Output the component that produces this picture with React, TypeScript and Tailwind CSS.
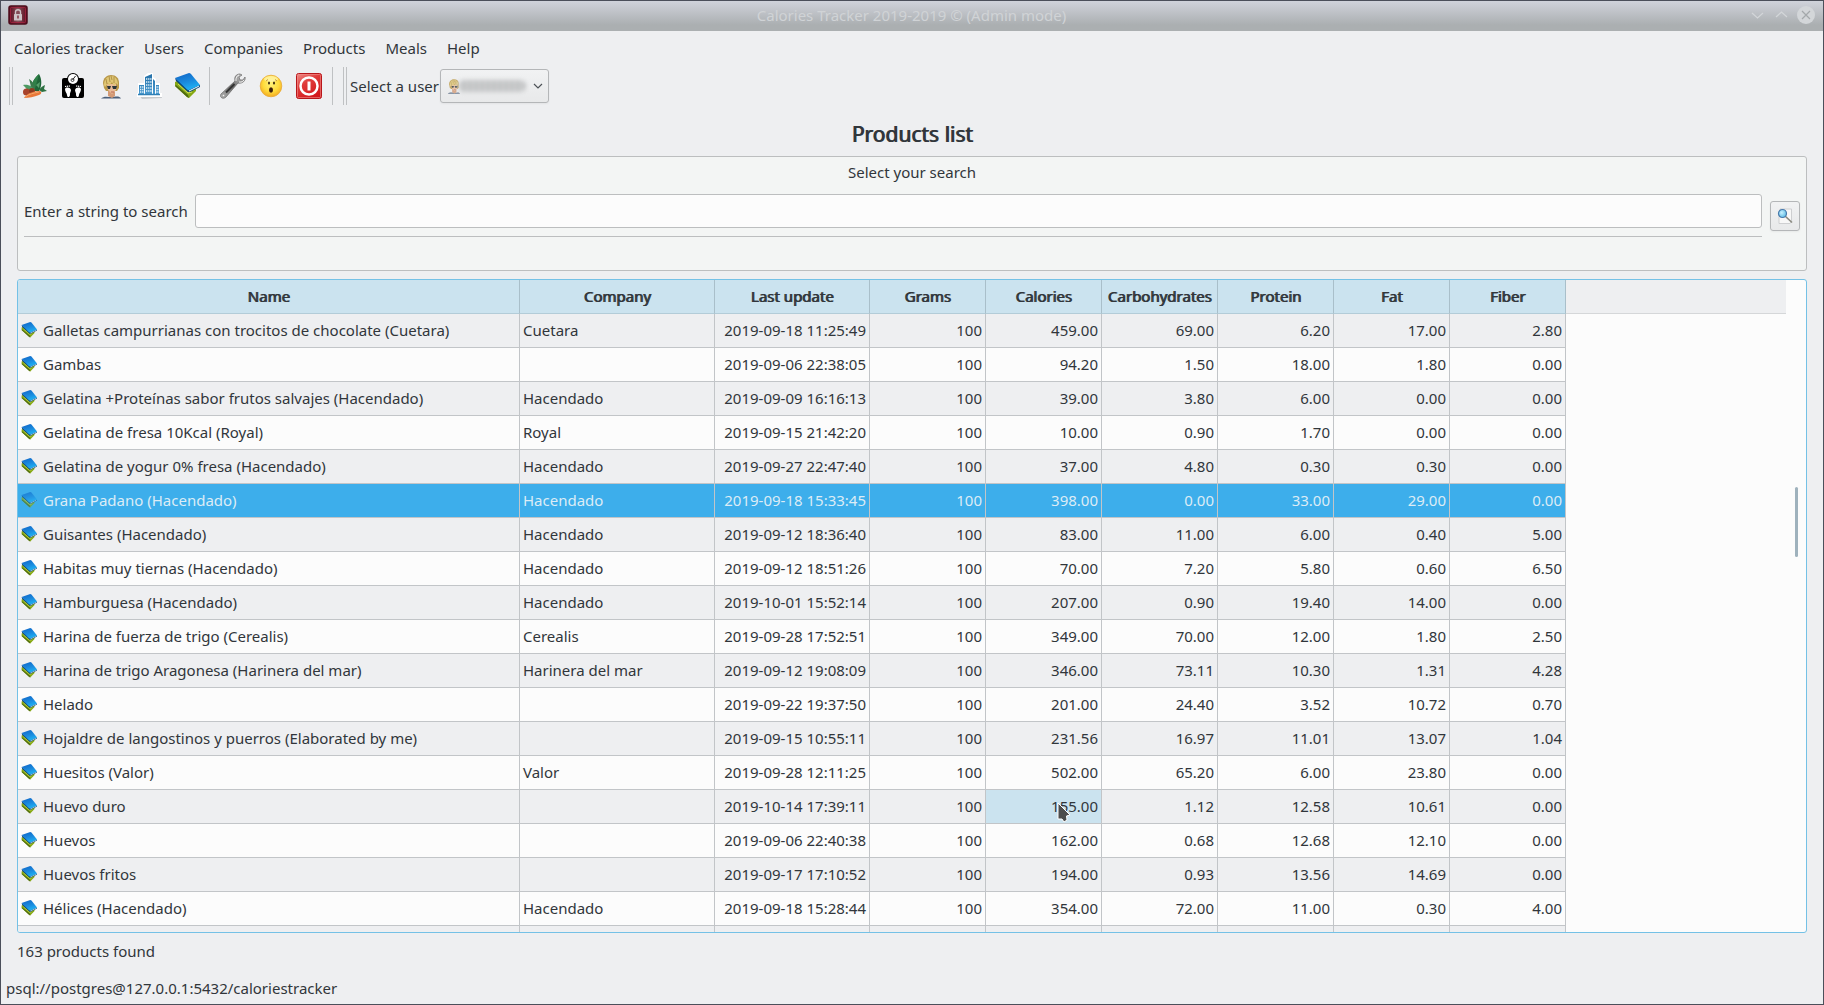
import React from "react";

type Row = [string, string, string, string, string, string, string, string, string];

const rows: Row[] = [
  ["Galletas campurrianas con trocitos de chocolate (Cuetara)", "Cuetara", "2019-09-18 11:25:49", "100", "459.00", "69.00", "6.20", "17.00", "2.80"],
  ["Gambas", "", "2019-09-06 22:38:05", "100", "94.20", "1.50", "18.00", "1.80", "0.00"],
  ["Gelatina +Proteínas sabor frutos salvajes (Hacendado)", "Hacendado", "2019-09-09 16:16:13", "100", "39.00", "3.80", "6.00", "0.00", "0.00"],
  ["Gelatina de fresa 10Kcal (Royal)", "Royal", "2019-09-15 21:42:20", "100", "10.00", "0.90", "1.70", "0.00", "0.00"],
  ["Gelatina de yogur 0% fresa (Hacendado)", "Hacendado", "2019-09-27 22:47:40", "100", "37.00", "4.80", "0.30", "0.30", "0.00"],
  ["Grana Padano (Hacendado)", "Hacendado", "2019-09-18 15:33:45", "100", "398.00", "0.00", "33.00", "29.00", "0.00"],
  ["Guisantes (Hacendado)", "Hacendado", "2019-09-12 18:36:40", "100", "83.00", "11.00", "6.00", "0.40", "5.00"],
  ["Habitas muy tiernas (Hacendado)", "Hacendado", "2019-09-12 18:51:26", "100", "70.00", "7.20", "5.80", "0.60", "6.50"],
  ["Hamburguesa (Hacendado)", "Hacendado", "2019-10-01 15:52:14", "100", "207.00", "0.90", "19.40", "14.00", "0.00"],
  ["Harina de fuerza de trigo (Cerealis)", "Cerealis", "2019-09-28 17:52:51", "100", "349.00", "70.00", "12.00", "1.80", "2.50"],
  ["Harina de trigo Aragonesa (Harinera del mar)", "Harinera del mar", "2019-09-12 19:08:09", "100", "346.00", "73.11", "10.30", "1.31", "4.28"],
  ["Helado", "", "2019-09-22 19:37:50", "100", "201.00", "24.40", "3.52", "10.72", "0.70"],
  ["Hojaldre de langostinos y puerros (Elaborated by me)", "", "2019-09-15 10:55:11", "100", "231.56", "16.97", "11.01", "13.07", "1.04"],
  ["Huesitos (Valor)", "Valor", "2019-09-28 12:11:25", "100", "502.00", "65.20", "6.00", "23.80", "0.00"],
  ["Huevo duro", "", "2019-10-14 17:39:11", "100", "155.00", "1.12", "12.58", "10.61", "0.00"],
  ["Huevos", "", "2019-09-06 22:40:38", "100", "162.00", "0.68", "12.68", "12.10", "0.00"],
  ["Huevos fritos", "", "2019-09-17 17:10:52", "100", "194.00", "0.93", "13.56", "14.69", "0.00"],
  ["Hélices (Hacendado)", "Hacendado", "2019-09-18 15:28:44", "100", "354.00", "72.00", "11.00", "0.30", "4.00"],
];

const headers = ["Name", "Company", "Last update", "Grams", "Calories", "Carbohydrates", "Protein", "Fat", "Fiber"];
const menus = ["Calories tracker", "Users", "Companies", "Products", "Meals", "Help"];
const SELECTED = 5;
const HOVERED = 14;

function Defs() {
  return (
    <svg width="0" height="0" className="absolute" aria-hidden="true">
      <defs>
        <linearGradient id="book" x1="0.300" y1="0" x2="0.700" y2="1">
          <stop offset="0" stopColor="#1169c9" />
          <stop offset="0.5" stopColor="#1a8ade" />
          <stop offset="1" stopColor="#20b6f6" />
        </linearGradient>
        <linearGradient id="red" x1="0" y1="0" x2="0.600" y2="1">
          <stop offset="0" stopColor="#f0908c" />
          <stop offset="0.45" stopColor="#df3b3a" />
          <stop offset="1" stopColor="#d3181c" />
        </linearGradient>
        <radialGradient id="face" cx="0.5" cy="0.4" r="0.6">
          <stop offset="0" stopColor="#fff27a" />
          <stop offset="0.6" stopColor="#ffdc3c" />
          <stop offset="1" stopColor="#f3ab22" />
        </radialGradient>
        <linearGradient id="steel" x1="0" y1="1" x2="1" y2="0">
          <stop offset="0" stopColor="#b5b5b5" />
          <stop offset="0.5" stopColor="#6d6d6d" />
          <stop offset="1" stopColor="#d6d6d6" />
        </linearGradient>
        <radialGradient id="lens" cx="0.4" cy="0.4" r="0.6">
          <stop offset="0" stopColor="#c8f1ff" />
          <stop offset="1" stopColor="#62bfe6" />
        </radialGradient>
        <linearGradient id="lock" x1="0" y1="0" x2="1" y2="0">
          <stop offset="0" stopColor="#5c0b1d" />
          <stop offset="0.5" stopColor="#86505a" />
          <stop offset="1" stopColor="#5c0b1d" />
        </linearGradient>
        <linearGradient id="tower" x1="0" y1="0" x2="0" y2="1">
          <stop offset="0" stopColor="#2470a8" />
          <stop offset="1" stopColor="#4a9bd0" />
        </linearGradient>
      </defs>
    </svg>
  );
}

function BookIcon({ className }: { className: string }) {
  return (
    <svg viewBox="0 0 26 26" className={className} aria-hidden="true">
      <path d="M1 9 L3 8 L15 17 L22 14 L22 18 L15 25 L13 24 L1 13 Z" fill="#86a814" />
      <path d="M2 12 L14 22 L15 25 L13 24 L1 13 Z" fill="#4f6b10" />
      <path d="M4 11 L14 20 L18 19" fill="none" stroke="#cfdd5a" strokeWidth="1" />
      <path d="M1 5 L2 8 L14 19 L16 19 L26 14 L26 12 L14 15 Z" fill="#0b4579" />
      <path d="M15 18 L25 13" fill="none" stroke="#dbe7ee" strokeWidth="1.200" />
      <path d="M1 5 L15 0 Q16 0 17 1 L26 12 L15 17 Q14 17 13 16.500 Z" fill="url(#book)" />
    </svg>
  );
}

function CarrotIcon() {
  return (
    <svg viewBox="0 0 26 26" className="size-[26px]" aria-hidden="true">
      <path d="M17 1 C20 6 20 13 17 18 L10 18 C9 12 11 6 17 1 Z" fill="#1f6538" />
      <path d="M17 1 C15 8 14 13 12 18 L9 18 C9 12 11 6 17 1 Z" fill="#2f8048" />
      <path d="M7 6 C11 8 13 13 13 18 L9 17 C9 13 8 9 7 6 Z" fill="#3a7a4c" />
      <path d="M1 12 C7 11 11 14 13 18 L6 18 C5 16 3 14 1 12 Z" fill="#4d9a63" />
      <path d="M17 17 C19 14 21 13 23 12 L22 16 L25 18 L20 19 Z" fill="#2c7040" />
      <path d="M14 12 L18 9 L17 15 Z" fill="#57a06b" />
      <circle cx="4.500" cy="19" r="3.500" fill="#a8432c" />
      <circle cx="10" cy="18" r="3" fill="#8c3a20" />
      <path d="M2 25 C4 21 11 18 17 18 C20 18 20 21 17 22 C12 24 7 25 2 25 Z" fill="#e9783a" />
      <path d="M3 24 C7 21 12 20 17 19" fill="none" stroke="#f4a76a" strokeWidth="1" />
    </svg>
  );
}

function ScaleIcon() {
  return (
    <svg viewBox="0 0 26 26" className="size-[26px]" aria-hidden="true">
      <rect x="2" y="5" width="22" height="20" rx="2" fill="#000" />
      <circle cx="13" cy="6" r="6" fill="#000" />
      <circle cx="13" cy="6" r="5" fill="#fff" />
      <path d="M12.500 7 L15.500 3" stroke="#222" strokeWidth="1" />
      <circle cx="12.500" cy="7" r="1.500" fill="none" stroke="#222" strokeWidth="0.800" />
      <path d="M5 16 C6 14 10 14 11 17 C11 19 9.500 20 10 22 C9.500 25 7 24.500 7 22 C7 20 5 19 5 16 Z" fill="#fff" />
      <path d="M21 16 C20 14 16 14 15 17 C15 19 16.500 20 16 22 C16.500 25 19 24.500 19 22 C19 20 21 19 21 16 Z" fill="#fff" />
      <path d="M5 13.500 L10 13 M16 13 L21 13.500" stroke="#fff" strokeWidth="1.200" strokeDasharray="1.200 0.700" />
    </svg>
  );
}

function PersonIcon({ className }: { className: string }) {
  return (
    <svg viewBox="0 0 26 26" className={className} aria-hidden="true">
      <path d="M3 25.500 C6 22.500 10 24 13 24 C17 24 21 22 23 25.500 Z" fill="#4b5f7a" />
      <path d="M10 18 H17 V23 L14 25 L10 23 Z" fill="#d39a76" />
      <path d="M6 15 L5 10 C5 5 9 2 13 2 C18 2 21 5 21 10 L21 15 L19 18 L8 18 Z" fill="#b9984a" />
      <path d="M9 11 L18 11 L18 17 L14 21 L10 17 Z" fill="#e9bb98" />
      <path d="M6 12 C6 6 10 3 13 3 C17 3 20 6 20 12 L18 10 L16 13 L14 9 L11 13 L10 10 L7 14 Z" fill="#dfc673" />
      <path d="M11 3 L12 9 M16 4 L16 10 M8 6 L9 11 M13 3 L14 7" stroke="#a58540" strokeWidth="0.800" fill="none" />
      <path d="M9 13 H13 L12 16 H10 Z M14 13 H19 L18 16 H15 Z" fill="#2c353b" />
      <path d="M13 19 H16" stroke="#a9523f" strokeWidth="0.800" />
    </svg>
  );
}

function CompanyIcon() {
  return (
    <svg viewBox="0 0 26 26" className="size-[26px]" aria-hidden="true">
      <path d="M3 22 L25 21 L26 25 L6 26 Z" fill="#c6c9cc" />
      <path d="M2 10 H8 V3 L12 0 H17 V4 L20 6 V10 H24 V20 H26 V24 H1 V20 H2 Z" fill="#fff" />
      <path d="M3 12 H8 V21 H3 Z M9 4 L16 1 V21 H9 Z M17 6 L19 8 V21 H17 Z M20 12 H23 V21 H20 Z" fill="url(#tower)" />
      <path d="M2 21.500 H24" stroke="#2f7fb5" strokeWidth="1.500" />
      <path d="M4 14 H7.500 M4 16.500 H7.500 M4 19 H7.500 M10 6 H15.500 M10 9 H15.500 M10 12 H15.500 M10 15 H15.500 M10 18 H15.500 M20.500 14 H23 M20.500 16.500 H23 M20.500 19 H23" stroke="#e0f0fa" strokeWidth="1.400" strokeDasharray="1.300 0.800" />
    </svg>
  );
}

function WrenchIcon() {
  return (
    <svg viewBox="0 0 26 26" className="size-[26px]" aria-hidden="true">
      <path d="M1 21 L15 8 C14 4 16 1 20 1 L22 2 L19 4 L20 7 L23 7 L25 4 C26 8 22 11 18 10 L6 24 C3 27 -1 24 1 21 Z" fill="url(#steel)" stroke="#666" strokeWidth="0.700" />
      <path d="M6 19.500 L14.500 11" stroke="#333" strokeWidth="2" />
      <path d="M16 8 C15.500 5 17 2.500 19 2 M19 9 C22 9.500 23 8.500 24 7" stroke="#f4f4f4" strokeWidth="1" fill="none" />
      <circle cx="3.500" cy="22.500" r="1.200" fill="#f3f3f3" stroke="#777" strokeWidth="0.500" />
    </svg>
  );
}

function SurprisedIcon() {
  return (
    <svg viewBox="0 0 26 26" className="size-[26px]" aria-hidden="true">
      <circle cx="13" cy="13" r="10.800" fill="url(#face)" stroke="#e8ab3a" strokeWidth="0.800" />
      <ellipse cx="13" cy="6" rx="7" ry="3" fill="#fffbc9" opacity="0.600" />
      <ellipse cx="11" cy="10" rx="1" ry="1.600" fill="#3b2a10" />
      <ellipse cx="16" cy="10" rx="1" ry="1.600" fill="#3b2a10" />
      <path d="M8 8 L10 6.500 M17 6.500 L19 8" stroke="#b98325" strokeWidth="0.800" />
      <ellipse cx="13" cy="17" rx="2" ry="2.700" fill="#3b1d0c" />
    </svg>
  );
}

function PowerIcon() {
  return (
    <svg viewBox="0 0 26 26" className="size-[26px]" aria-hidden="true">
      <rect x="0.500" y="0.500" width="25" height="25" rx="2" fill="url(#red)" stroke="#b8161a" />
      <rect x="1.500" y="1.500" width="23" height="23" rx="1" fill="none" stroke="#f08e8b" strokeWidth="0.600" />
      <circle cx="13" cy="13" r="8.500" fill="none" stroke="#fff" strokeWidth="2.500" />
      <path d="M13 8.500 V17.500" stroke="#fff" strokeWidth="3" />
    </svg>
  );
}

function SearchIcon() {
  return (
    <svg viewBox="0 0 16 16" className="size-4" aria-hidden="true">
      <path d="M3 1 H14.500 V13 L13 15.500 H2 V8 Z" fill="#f7f7f7" stroke="#c9cbcd" strokeWidth="0.900" />
      <path d="M8 8 L15 14.500" stroke="#8a8a80" strokeWidth="1.600" />
      <circle cx="5.500" cy="5.500" r="4" fill="url(#lens)" stroke="#4879ab" strokeWidth="1.200" />
    </svg>
  );
}

function LockIcon() {
  return (
    <svg viewBox="0 0 20 20" className="size-5" aria-hidden="true">
      <rect x="1" y="1" width="18" height="18" rx="2" fill="url(#lock)" stroke="#4d0c1b" strokeWidth="1.500" />
      <rect x="2.500" y="2.500" width="15" height="15" rx="1" fill="none" stroke="#a3223f" strokeWidth="0.800" />
      <path d="M7.500 9 V7 C7.500 4 12.500 4 12.500 7 V9" fill="none" stroke="#cdc3c6" strokeWidth="1.400" />
      <rect x="6" y="9" width="8" height="6.500" rx="0.500" fill="#cdc3c6" />
      <path d="M10 10.500 V13.500" stroke="#7d2a38" strokeWidth="1.400" />
    </svg>
  );
}

function Separator() {
  return <span className="h-[38px] w-px bg-[#bfc1c3]" />;
}

function Tool({ label, children }: { label: string; children: React.ReactNode }) {
  return (
    <button type="button" aria-label={label} className="flex w-[38px] items-center justify-center">
      {children}
    </button>
  );
}

export default function App() {
  return (
    <div className="flex h-screen flex-col overflow-hidden border border-[#4b4f5a] bg-[#eeeff1] font-['Noto_Sans',sans-serif] text-[15px] leading-5 text-[#31363b]">
      <Defs />
      <header className="flex h-[30px] shrink-0 items-center bg-linear-to-b from-[#d0d3db] to-[#abafb1] to-80% pr-2 pb-[2px] pl-[7px]">
        <div className="flex flex-1">
          <LockIcon />
        </div>
        <h1 className="text-[#d0d3d6]">Calories Tracker 2019-2019 © (Admin mode)</h1>
        <div className="flex flex-1 items-center justify-end gap-[6px]">
          <button type="button" aria-label="Minimize">
            <svg viewBox="0 0 18 18" className="size-[18px]"><path d="M3 7 L8.500 12 L14 7" fill="none" stroke="#d3d6d9" strokeWidth="1.200" /></svg>
          </button>
          <button type="button" aria-label="Maximize">
            <svg viewBox="0 0 18 18" className="size-[18px]"><path d="M3 11 L8.500 6 L14 11" fill="none" stroke="#d3d6d9" strokeWidth="1.200" /></svg>
          </button>
          <button type="button" aria-label="Close">
            <svg viewBox="0 0 18 18" className="size-[18px]"><circle cx="9" cy="9" r="9" fill="#d3d6d9" /><path d="M5 5 L13 13 M13 5 L5 13" stroke="#a4a8ab" strokeWidth="1.200" /></svg>
          </button>
        </div>
      </header>

      <nav className="flex h-9 shrink-0 items-center gap-5 px-[13px] pb-[2px]">
        {menus.map((m) => (
          <button type="button" key={m}>{m}</button>
        ))}
      </nav>

      <div className="flex h-[38px] shrink-0 items-center pl-2">
        <div className="flex gap-[2px]"><Separator /><Separator /></div>
        <div className="flex pl-[3px]">
          <Tool label="Food"><CarrotIcon /></Tool>
          <Tool label="Biometrics"><ScaleIcon /></Tool>
          <Tool label="Users"><PersonIcon className="size-[26px]" /></Tool>
          <Tool label="Companies"><CompanyIcon /></Tool>
          <Tool label="Products"><BookIcon className="size-[26px]" /></Tool>
        </div>
        <div className="flex items-center pl-[3px]">
          <Separator />
          <div className="flex pl-1">
            <Tool label="Settings"><WrenchIcon /></Tool>
            <Tool label="About"><SurprisedIcon /></Tool>
            <Tool label="Exit"><PowerIcon /></Tool>
          </div>
        </div>
        <div className="flex pl-1"><Separator /></div>
        <div className="flex gap-[2px] pl-[10px]"><Separator /><Separator /></div>
        <label htmlFor="user" className="pr-px pl-[3px]">Select a user</label>
        <div className="relative h-[34px] w-[109px]">
          <select id="user" className="size-full appearance-none rounded-[3px] border border-[#b4b6b8] bg-linear-to-b from-[#f1f2f3] to-[#e8e9ea] shadow-xs">
            <option></option>
          </select>
          <span className="pointer-events-none absolute inset-y-0 left-[6px] flex items-center">
            <PersonIcon className="size-4 opacity-80" />
            <span className="-ml-1 h-3 w-[68px] rounded-full bg-[repeating-linear-gradient(90deg,#b0b2b3_0px,#dcddde_3px,#b0b2b3_6px)] blur-[2px]" />
          </span>
          <svg viewBox="0 0 10 6" className="pointer-events-none absolute top-[14px] right-[6px] h-[6px] w-[10px]" aria-hidden="true">
            <path d="M1 1 L5 5 L9 1" fill="none" stroke="#4d5257" strokeWidth="1.200" />
          </svg>
        </div>
      </div>

      <main className="flex min-h-0 flex-1 flex-col px-4">
        <h2 className="flex h-[51px] shrink-0 items-center justify-center pt-[6px] text-[21px] [text-shadow:1px_0_0_currentColor]">Products list</h2>

        <form className="h-[115px] shrink-0 rounded-[3px] border border-[#bcbebf] bg-[#f3f5f4] px-[6px]" onSubmit={(e) => e.preventDefault()}>
          <p className="pt-[5px] text-center">Select your search</p>
          <div className="flex items-center gap-2 pt-3">
            <div className="flex-1">
              <div className="flex items-center gap-[7px] border-b border-[#bcbebf] pb-2">
                <label htmlFor="search">Enter a string to search</label>
                <input id="search" type="text" className="h-[34px] min-w-0 flex-1 rounded-[3px] border border-[#bcbebf] bg-[#fcfcfc] px-2" />
              </div>
            </div>
            <button type="submit" aria-label="Search" className="flex size-[30px] items-center justify-center rounded-[3px] border border-[#b4b6b8] bg-linear-to-b from-[#f1f2f3] to-[#e8e9ea] shadow-xs">
              <SearchIcon />
            </button>
          </div>
        </form>

        <section className="mt-2 flex min-h-0 flex-1 overflow-hidden rounded-[3px] border border-[#74c1e6] bg-[#fcfcfc]">
          <div className="min-w-0 flex-1 overflow-hidden">
            <table className="w-full table-fixed border-separate border-spacing-0">
              <colgroup>
                <col className="w-[502px]" />
                <col className="w-[195px]" />
                <col className="w-[155px]" />
                <col className="w-[116px]" />
                <col className="w-[116px]" />
                <col className="w-[116px]" />
                <col className="w-[116px]" />
                <col className="w-[116px]" />
                <col className="w-[116px]" />
                <col />
              </colgroup>
              <thead>
                <tr className="h-[34px]">
                  {headers.map((h) => (
                    <th key={h} scope="col" className="border-r border-b border-r-[#a9bfca] border-b-[#b3ccd8] bg-[#cbe3ef] p-0 pb-px text-center font-normal [text-shadow:1px_0_0_currentColor]">{h}</th>
                  ))}
                  <td className="border-b border-[#d5d7d9] bg-[#eeeff1] p-0" />
                </tr>
              </thead>
              <tbody>
                {rows.map((r, i) => (
                  <tr key={r[0]} className={i === SELECTED ? "h-[34px] bg-[#3daeeb] text-[#dcecf6]" : i % 2 === 0 ? "h-[34px] bg-[#eeeff1]" : "h-[34px] bg-[#fcfcfc]"}>
                    {r.map((c, j) => (
                      <td
                        key={j}
                        className={
                          j <= 1
                            ? "border-r border-b border-[#c2c5c8] p-0 pb-[2px] pl-[3px] whitespace-nowrap"
                            : i === HOVERED && j === 4
                              ? "relative border-r border-b border-[#c2c5c8] bg-[#cbe3ef] p-0 pr-[3px] pb-[2px] text-right whitespace-nowrap"
                              : "border-r border-b border-[#c2c5c8] p-0 pr-[3px] pb-[2px] text-right whitespace-nowrap"
                        }
                      >
                        {j === 0 ? (
                          <span className="flex items-center gap-[6px]">
                            <BookIcon className={i === SELECTED ? "size-4 opacity-70" : "size-4"} />
                            {c}
                          </span>
                        ) : (
                          c
                        )}
                        {i === HOVERED && j === 4 && (
                          <svg viewBox="0 0 14 21" className="pointer-events-none absolute top-3 left-[71px] h-[21px] w-[14px]" aria-hidden="true">
                            <path d="M1 1 L13 13 L9.500 14 L10 18 L7 20 L5 17 L1 17 Z" fill="#4d4d4d" stroke="#fff" strokeWidth="1" />
                          </svg>
                        )}
                      </td>
                    ))}
                    <td className="bg-[#fcfcfc] p-0" />
                  </tr>
                ))}
                <tr className="h-[34px] bg-[#eeeff1]">
                  {headers.map((h) => (
                    <td key={h} className="border-r border-[#c2c5c8] p-0" />
                  ))}
                  <td className="bg-[#fcfcfc] p-0" />
                </tr>
              </tbody>
            </table>
          </div>
          <div className="flex w-5 shrink-0 flex-col items-center">
            <div className="grow-[207]" />
            <div className="h-[70px] w-[3px] rounded-full bg-[#9fb2bd]" />
            <div className="grow-[374]" />
          </div>
        </section>

        <p className="flex h-[37px] shrink-0 items-center pb-[2px]">163 products found</p>
      </main>

      <footer className="flex h-[34px] shrink-0 items-center px-[5px] pt-[2px]">psql://postgres@127.0.0.1:5432/caloriestracker</footer>
    </div>
  );
}
